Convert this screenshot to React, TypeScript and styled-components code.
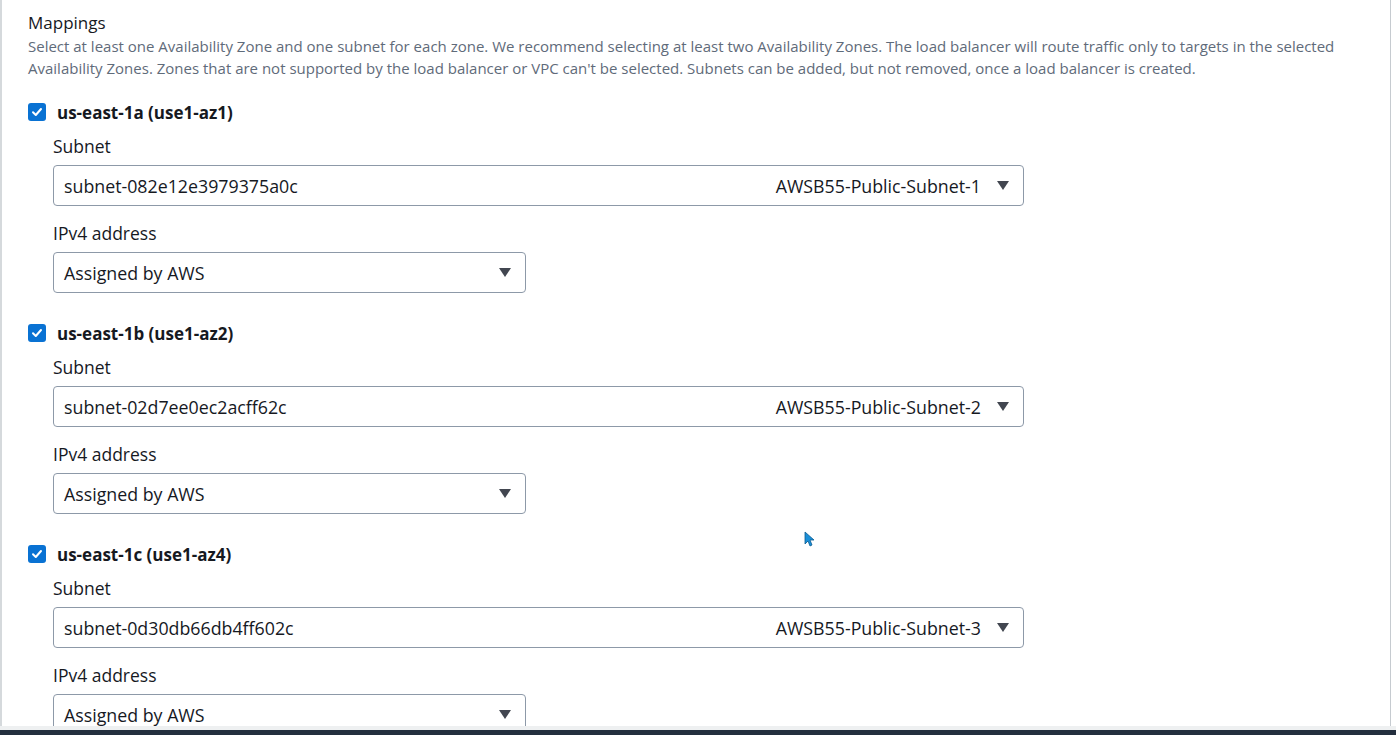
import styled, { createGlobalStyle } from "styled-components";

const GlobalStyle = createGlobalStyle`
    html, body {
        margin: 0;
        padding: 0;
        background: #ffffff;
        overflow: hidden;
    }
    body {
        font-family: "Open Sans", "Noto Sans", Arial, sans-serif;
        color: #16191f;
    }
`;

const Screen = styled.div`
    height: 735px;
    display: flex;
    flex-direction: column;
`;

const Panel = styled.div`
    flex: 1;
    overflow: hidden;
    position: relative;
    margin-right: 5px;
    border-left: 2px solid #d5d9dc;
    border-right: 1px solid #c6cbd0;
    padding: 11px 0 0 26px;
`;

const Footer = styled.div`
    height: 4px;
    background: #eef0f1;
    border-bottom: 5px solid #232f3e;
`;

const Title = styled.div`
    font-size: 17px;
    line-height: 24px;
`;

const Description = styled.p`
    margin: 0 0 22px;
    max-width: 1340px;
    font-size: 15px;
    line-height: 22px;
    color: #5f6b7a;
`;

const Zone = styled.section`
    margin-bottom: 29px;
`;

const ZoneHeader = styled.label`
    display: flex;
    align-items: center;
    gap: 11px;
    height: 22px;
    font-size: 17px;
    font-weight: 700;
`;

const Check = styled.span`
    width: 18px;
    height: 18px;
    border-radius: 3px;
    background: #0972d3;
    display: flex;
    align-items: center;
    justify-content: center;
`;

const Fields = styled.div`
    padding: 11px 0 0 25px;
`;

const FieldLabel = styled.div`
    font-size: 17.5px;
    line-height: 24px;
    margin-bottom: 7px;
`;

const Field = styled.div`
    margin-bottom: 15px;
`;

const Select = styled.div<{ $width: number }>`
    width: ${p => p.$width}px;
    height: 41px;
    box-sizing: border-box;
    border: 1px solid #8d99a8;
    border-radius: 4px;
    display: flex;
    align-items: center;
    padding: 0 14px 0 10px;
    font-size: 17.8px;
    white-space: nowrap;
`;

const Value = styled.span`
    flex: 1;
`;

const Tag = styled.span`
    margin-right: 16px;
`;

const Caret = styled.span`
    width: 0;
    height: 0;
    border-left: 6px solid transparent;
    border-right: 6px solid transparent;
    border-top: 9px solid #424650;
`;

const Cursor = styled.svg`
    position: absolute;
    left: 802px;
    top: 531px;
`;

const zones = [
    { name: "us-east-1a (use1-az1)", subnet: "subnet-082e12e3979375a0c", tag: "AWSB55-Public-Subnet-1" },
    { name: "us-east-1b (use1-az2)", subnet: "subnet-02d7ee0ec2acff62c", tag: "AWSB55-Public-Subnet-2" },
    { name: "us-east-1c (use1-az4)", subnet: "subnet-0d30db66db4ff602c", tag: "AWSB55-Public-Subnet-3" },
];

function App() {
    return (
        <Screen>
            <GlobalStyle />
            <Panel>
                <Title>Mappings</Title>
                <Description>
                    Select at least one Availability Zone and one subnet for each zone. We recommend selecting at least two
                    Availability Zones. The load balancer will route traffic only to targets in the selected Availability
                    Zones. Zones that are not supported by the load balancer or VPC can't be selected. Subnets can be added,
                    but not removed, once a load balancer is created.
                </Description>
                {zones.map(z => (
                    <Zone key={z.name}>
                        <ZoneHeader>
                            <Check>
                                <svg width="12" height="12" viewBox="0 0 12 12">
                                    <path d="M2 6.2l2.8 2.8L10 3" fill="none" stroke="#fff" strokeWidth="2" strokeLinecap="round" strokeLinejoin="round" />
                                </svg>
                            </Check>
                            {z.name}
                        </ZoneHeader>
                        <Fields>
                            <Field>
                                <FieldLabel>Subnet</FieldLabel>
                                <Select $width={971}>
                                    <Value>{z.subnet}</Value>
                                    <Tag>{z.tag}</Tag>
                                    <Caret />
                                </Select>
                            </Field>
                            <Field>
                                <FieldLabel>IPv4 address</FieldLabel>
                                <Select $width={473}>
                                    <Value>Assigned by AWS</Value>
                                    <Caret />
                                </Select>
                            </Field>
                        </Fields>
                    </Zone>
                ))}
                <Cursor width="12" height="16" viewBox="0 0 12 16">
                    <path d="M1 1v12l3-3 2 5 2-1-2-5h4z" fill="#1a8fd8" stroke="#0b5a8f" strokeWidth="0.8" />
                </Cursor>
            </Panel>
            <Footer />
        </Screen>
    );
}

export default App;
